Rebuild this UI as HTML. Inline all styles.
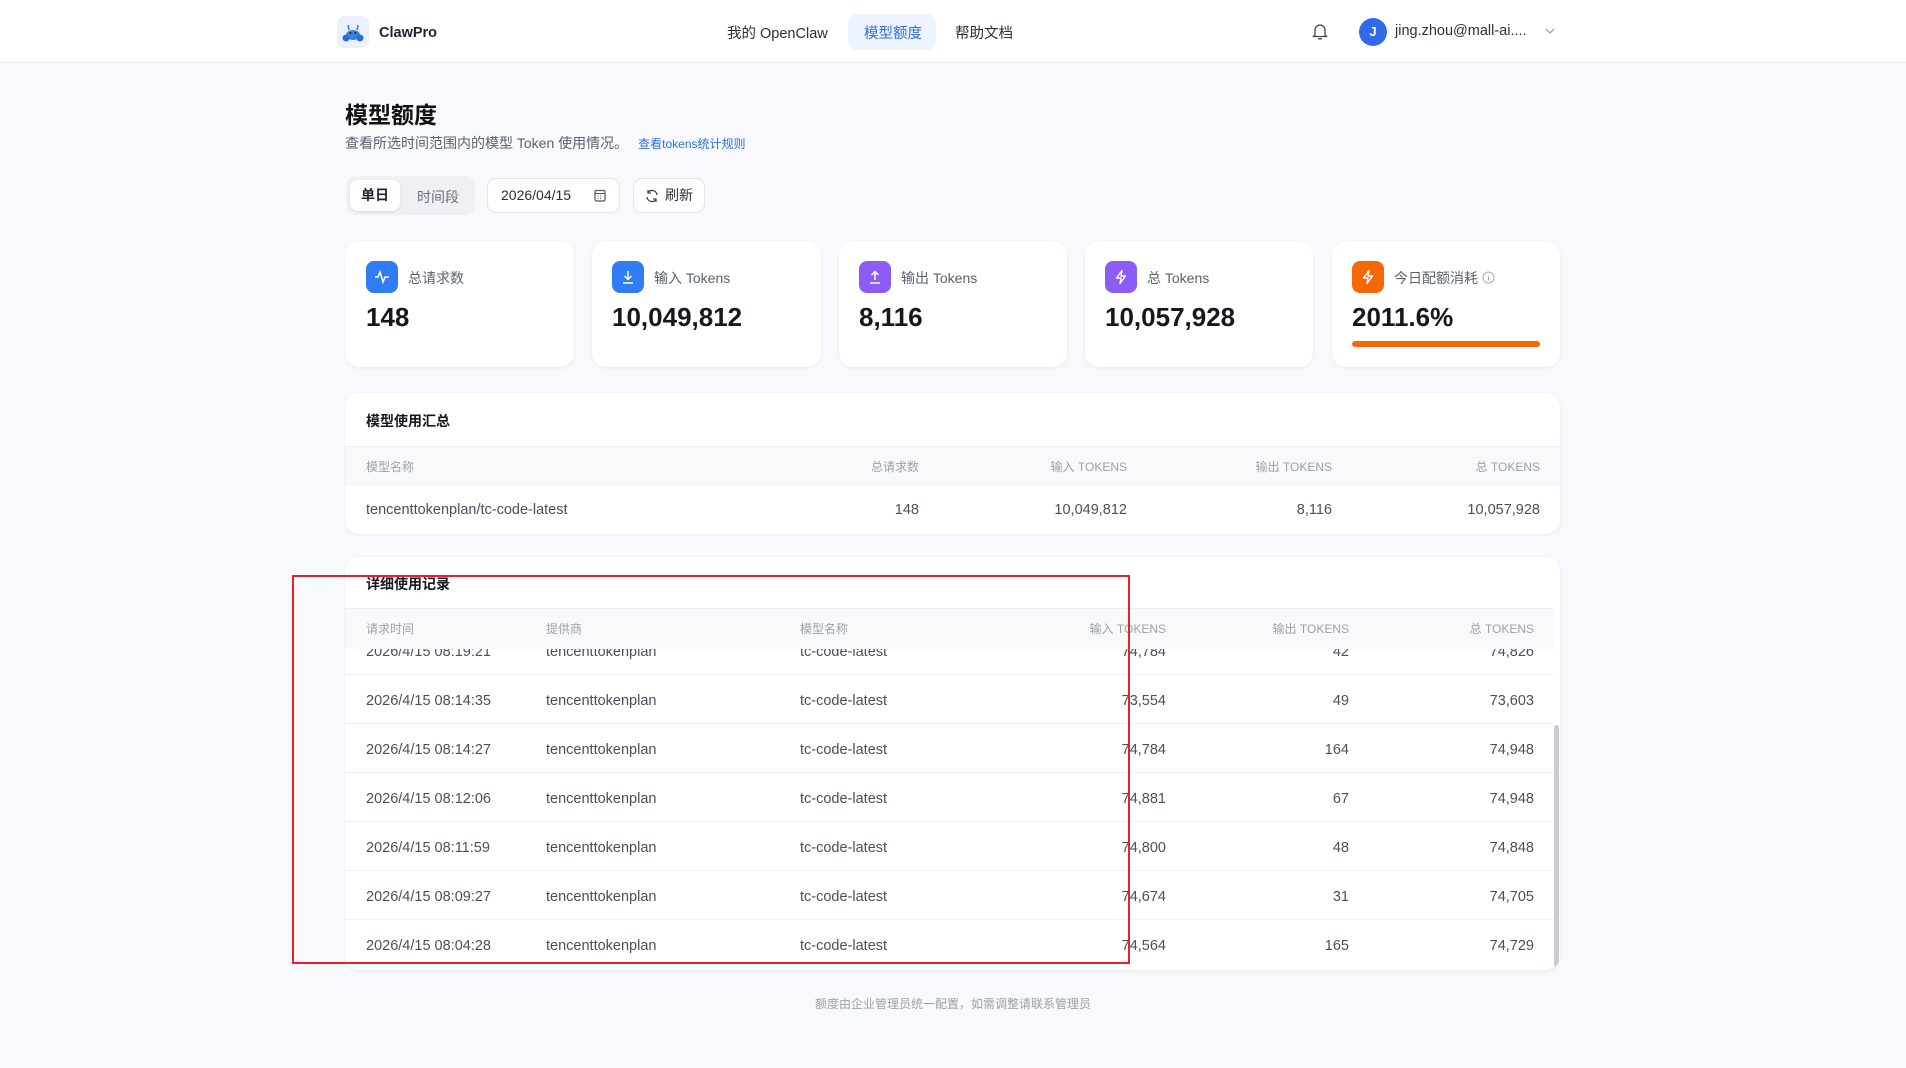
<!DOCTYPE html>
<html><head><meta charset="utf-8"><style>
*{box-sizing:border-box;margin:0;padding:0}
body{width:1906px;height:1068px;overflow:hidden;background:#f8f9fc;font-family:"Liberation Sans","Noto Sans CJK SC",sans-serif;color:#1f2430;position:relative}
.a{position:absolute}
.hdr{left:0;top:0;width:1906px;height:63px;background:#fff;border-bottom:1px solid #eceef2}
.nav{font-size:14.5px;color:#2b2f38;top:22px}
.card{background:#fff;border-radius:14px;box-shadow:0 1px 3px rgba(20,30,60,.07)}
.ic{width:32px;height:32px;border-radius:8px;display:flex;align-items:center;justify-content:center}
.lbl{font-size:14px;color:#5b6170}
.val{font-size:26px;font-weight:bold;color:#15181f}
.th{font-size:12px;color:#9aa0ab;top:0;line-height:40px}
.td{font-size:14.5px;color:#4a4f5a;line-height:49px;top:2px}
.r{text-align:right}
</style></head><body>
<div class="a hdr"></div>
<div class="a" style="left:337px;top:16px;width:32px;height:32px;border-radius:8px;background:#eaf1fd"><svg width="32" height="32" viewBox="0 0 32 32"><ellipse cx="16" cy="19" rx="7" ry="5" fill="#3f7fe0"/><circle cx="9" cy="22" r="3.5" fill="#2f6dd0"/><circle cx="23" cy="22" r="3.5" fill="#2f6dd0"/><path d="M12 14 L11 9 M20 14 L21 9" stroke="#3f7fe0" stroke-width="1.6"/><circle cx="13.5" cy="17" r="1" fill="#123"/><circle cx="18.5" cy="17" r="1" fill="#123"/></svg></div>
<div class="a" style="left:379px;top:25px;font-size:14.5px;font-weight:bold">ClawPro</div>
<div class="a nav" style="left:727px">我的 OpenClaw</div>
<div class="a" style="left:848px;top:14px;width:88px;height:36px;border-radius:9px;background:#eef4ff"></div>
<div class="a nav" style="left:864px;color:#2f6fe6">模型额度</div>
<div class="a nav" style="left:955px">帮助文档</div>
<svg class="a" style="left:1312px;top:22px" width="16" height="18" viewBox="0 0 16 18"><path d="M3 13V8a5 5 0 0 1 10 0v5l1.5 1.5h-13z" fill="none" stroke="#444" stroke-width="1.3"/><path d="M6.5 16a1.6 1.6 0 0 0 3 0" stroke="#444" stroke-width="1.3" fill="none"/></svg>
<div class="a" style="left:1359px;top:18px;width:28px;height:28px;border-radius:50%;background:#2f6be8;color:#fff;font-size:13px;font-weight:bold;text-align:center;line-height:28px">J</div>
<div class="a" style="left:1395px;top:23px;font-size:14.5px;color:#2b2f38">jing.zhou@mall-ai....</div>
<svg class="a" style="left:1545px;top:28px" width="10" height="7" viewBox="0 0 10 7"><path d="M1 1l4 4 4-4" stroke="#999" fill="none" stroke-width="1.2"/></svg>

<div class="a" style="left:345px;top:96px;font-size:23px;font-weight:bold;color:#111">模型额度</div>
<div class="a" style="left:345px;top:133px;font-size:14px;color:#5b6170">查看所选时间范围内的模型 Token 使用情况。<span style="color:#2f6fe6;font-size:12px;margin-left:10px">查看tokens统计规则</span></div>

<div class="a" style="left:346px;top:176px;width:129px;height:39px;border-radius:10px;background:#eef0f4"></div>
<div class="a" style="left:350px;top:180px;width:50px;height:31px;border-radius:8px;background:#fff;box-shadow:0 1px 2px rgba(0,0,0,.1);font-size:14px;font-weight:bold;text-align:center;line-height:31px">单日</div>
<div class="a" style="left:417px;top:187px;font-size:14px;color:#6b7080">时间段</div>
<div class="a" style="left:487px;top:178px;width:133px;height:35px;border:1px solid #e2e5ea;border-radius:9px;background:#fff;font-size:14px;line-height:33px;padding-left:13px;color:#2b2f38">2026/04/15<svg style="position:absolute;left:106px;top:10px" width="12" height="13" viewBox="0 0 12 13"><rect x="1" y="1.5" width="10" height="10.5" rx="1.5" fill="none" stroke="#555" stroke-width="1.2"/><path d="M1 4.5h10M3.5 7h1M6 7h1M3.5 9.5h1M6 9.5h1" stroke="#555" stroke-width="1.1"/></svg></div>
<div class="a" style="left:633px;top:178px;width:72px;height:35px;border:1px solid #e2e5ea;border-radius:9px;background:#fff;font-size:14px;line-height:33px;padding-left:31px;color:#2b2f38"><svg style="position:absolute;left:11px;top:10px" width="14" height="14" viewBox="0 0 14 14"><path d="M12 6A5 5 0 0 0 3 3.5M2 8a5 5 0 0 0 9 2.5" fill="none" stroke="#444" stroke-width="1.3"/><path d="M3 1v3h3M11 13v-3H8" fill="none" stroke="#444" stroke-width="1.3"/></svg>刷新</div>

<div class="a card" style="left:345px;top:241px;width:229px;height:126px"></div>
<div class="a card" style="left:592px;top:241px;width:229px;height:126px"></div>
<div class="a card" style="left:839px;top:241px;width:228px;height:126px"></div>
<div class="a card" style="left:1085px;top:241px;width:228px;height:126px"></div>
<div class="a card" style="left:1332px;top:241px;width:228px;height:126px"></div>

<div class="a ic" style="left:366px;top:261px;background:#2f7cf6"><svg width="16" height="16" viewBox="0 0 16 16"><path d="M1 8h3l2-5 3 10 2-5h4" fill="none" stroke="#fff" stroke-width="1.5"/></svg></div>
<div class="a lbl" style="left:408px;top:268px">总请求数</div>
<div class="a val" style="left:366px;top:302px">148</div>

<div class="a ic" style="left:612px;top:261px;background:#2f7cf6"><svg width="16" height="16" viewBox="0 0 16 16"><path d="M8 2v8M4.5 7L8 10.5 11.5 7M3 14h10" fill="none" stroke="#fff" stroke-width="1.5"/></svg></div>
<div class="a lbl" style="left:654px;top:268px">输入 Tokens</div>
<div class="a val" style="left:612px;top:302px">10,049,812</div>

<div class="a ic" style="left:859px;top:261px;background:#8b5cf6"><svg width="16" height="16" viewBox="0 0 16 16"><path d="M8 11V3M4.5 6L8 2.5 11.5 6M3 14h10" fill="none" stroke="#fff" stroke-width="1.5"/></svg></div>
<div class="a lbl" style="left:901px;top:268px">输出 Tokens</div>
<div class="a val" style="left:859px;top:302px">8,116</div>

<div class="a ic" style="left:1105px;top:261px;background:#8b5cf6"><svg width="16" height="16" viewBox="0 0 16 16"><path d="M9 1.5L3.5 9H8l-1 5.5L12.5 7H8z" fill="none" stroke="#fff" stroke-width="1.4" stroke-linejoin="round"/></svg></div>
<div class="a lbl" style="left:1147px;top:268px">总 Tokens</div>
<div class="a val" style="left:1105px;top:302px">10,057,928</div>

<div class="a ic" style="left:1352px;top:261px;background:#f76707"><svg width="16" height="16" viewBox="0 0 16 16"><path d="M9 1.5L3.5 9H8l-1 5.5L12.5 7H8z" fill="none" stroke="#fff" stroke-width="1.4" stroke-linejoin="round"/></svg></div>
<div class="a lbl" style="left:1394px;top:268px">今日配额消耗 <svg width="13" height="13" viewBox="0 0 13 13" style="vertical-align:-1px"><circle cx="6.5" cy="6.5" r="5.5" fill="none" stroke="#aaa"/><path d="M6.5 5.5v4M6.5 3.5v.8" stroke="#aaa" stroke-width="1.1"/></svg></div>
<div class="a val" style="left:1352px;top:302px">2011.6%</div>
<div class="a" style="left:1352px;top:341px;width:188px;height:6px;border-radius:3px;background:#f76707"></div>

<div class="a card" style="left:345px;top:393px;width:1215px;height:141px;overflow:hidden">
 <div class="a" style="left:21px;top:18px;font-size:14px;font-weight:bold;color:#15181f">模型使用汇总</div>
 <div class="a" style="left:0;top:53px;width:1215px;height:40px;background:#f8f9fb;border-top:1px solid #eef0f3">
  <div class="a th" style="left:21px">模型名称</div>
  <div class="a th r" style="left:374px;width:200px">总请求数</div>
  <div class="a th r" style="left:582px;width:200px">输入 TOKENS</div>
  <div class="a th r" style="left:787px;width:200px">输出 TOKENS</div>
  <div class="a th r" style="left:995px;width:200px">总 TOKENS</div>
 </div>
 <div class="a td" style="left:21px;top:93px">tencenttokenplan/tc-code-latest</div>
 <div class="a td r" style="left:374px;top:93px;width:200px">148</div>
 <div class="a td r" style="left:582px;top:93px;width:200px">10,049,812</div>
 <div class="a td r" style="left:787px;top:93px;width:200px">8,116</div>
 <div class="a td r" style="left:995px;top:93px;width:200px">10,057,928</div>
</div>

<div class="a card" style="left:345px;top:557px;width:1215px;height:413px;overflow:hidden">
 <div class="a" style="left:21px;top:17px;font-size:14px;font-weight:bold;color:#15181f">详细使用记录</div>
 <div class="a" style="left:0;top:92px;width:1209px;height:321px;overflow:hidden">
  <div class="a" style="left:0;top:-23px;width:1209px">
   <div style="position:relative;height:49px;border-bottom:1px solid #f0f1f4"><div class="a td" style="left:21px">2026/4/15 08:19:21</div><div class="a td" style="left:201px">tencenttokenplan</div><div class="a td" style="left:455px">tc-code-latest</div><div class="a td r" style="left:621px;width:200px">74,784</div><div class="a td r" style="left:804px;width:200px">42</div><div class="a td r" style="left:989px;width:200px">74,826</div></div>
   <div style="position:relative;height:49px;border-bottom:1px solid #f0f1f4"><div class="a td" style="left:21px">2026/4/15 08:14:35</div><div class="a td" style="left:201px">tencenttokenplan</div><div class="a td" style="left:455px">tc-code-latest</div><div class="a td r" style="left:621px;width:200px">73,554</div><div class="a td r" style="left:804px;width:200px">49</div><div class="a td r" style="left:989px;width:200px">73,603</div></div>
   <div style="position:relative;height:49px;border-bottom:1px solid #f0f1f4"><div class="a td" style="left:21px">2026/4/15 08:14:27</div><div class="a td" style="left:201px">tencenttokenplan</div><div class="a td" style="left:455px">tc-code-latest</div><div class="a td r" style="left:621px;width:200px">74,784</div><div class="a td r" style="left:804px;width:200px">164</div><div class="a td r" style="left:989px;width:200px">74,948</div></div>
   <div style="position:relative;height:49px;border-bottom:1px solid #f0f1f4"><div class="a td" style="left:21px">2026/4/15 08:12:06</div><div class="a td" style="left:201px">tencenttokenplan</div><div class="a td" style="left:455px">tc-code-latest</div><div class="a td r" style="left:621px;width:200px">74,881</div><div class="a td r" style="left:804px;width:200px">67</div><div class="a td r" style="left:989px;width:200px">74,948</div></div>
   <div style="position:relative;height:49px;border-bottom:1px solid #f0f1f4"><div class="a td" style="left:21px">2026/4/15 08:11:59</div><div class="a td" style="left:201px">tencenttokenplan</div><div class="a td" style="left:455px">tc-code-latest</div><div class="a td r" style="left:621px;width:200px">74,800</div><div class="a td r" style="left:804px;width:200px">48</div><div class="a td r" style="left:989px;width:200px">74,848</div></div>
   <div style="position:relative;height:49px;border-bottom:1px solid #f0f1f4"><div class="a td" style="left:21px">2026/4/15 08:09:27</div><div class="a td" style="left:201px">tencenttokenplan</div><div class="a td" style="left:455px">tc-code-latest</div><div class="a td r" style="left:621px;width:200px">74,674</div><div class="a td r" style="left:804px;width:200px">31</div><div class="a td r" style="left:989px;width:200px">74,705</div></div>
   <div style="position:relative;height:49px"><div class="a td" style="left:21px">2026/4/15 08:04:28</div><div class="a td" style="left:201px">tencenttokenplan</div><div class="a td" style="left:455px">tc-code-latest</div><div class="a td r" style="left:621px;width:200px">74,564</div><div class="a td r" style="left:804px;width:200px">165</div><div class="a td r" style="left:989px;width:200px">74,729</div></div>
  </div>
 </div>
 <div class="a" style="left:0;top:51px;width:1209px;height:41px;background:#f8f9fb;border-top:1px solid #eef0f3">
  <div class="a th" style="left:21px">请求时间</div>
  <div class="a th" style="left:201px">提供商</div>
  <div class="a th" style="left:455px">模型名称</div>
  <div class="a th r" style="left:621px;width:200px">输入 TOKENS</div>
  <div class="a th r" style="left:804px;width:200px">输出 TOKENS</div>
  <div class="a th r" style="left:989px;width:200px">总 TOKENS</div>
 </div>
 <div class="a" style="left:1209px;top:168px;width:5px;height:242px;border-radius:3px;background:#c9ccd2"></div>
</div>

<div class="a" style="left:292px;top:575px;width:838px;height:389px;border:2px solid #e8202a"></div>

<div class="a" style="left:0;top:995px;width:1906px;text-align:center;font-size:12px;color:#9aa0ab">额度由企业管理员统一配置，如需调整请联系管理员</div>
</body></html>
